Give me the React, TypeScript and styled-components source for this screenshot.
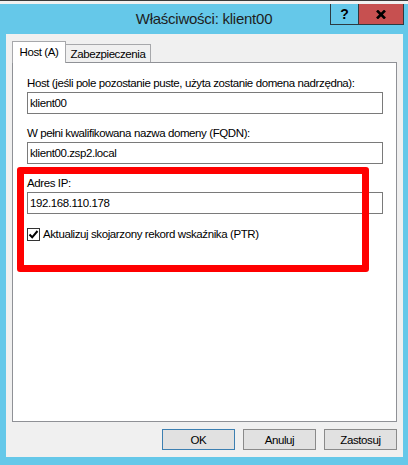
import React from "react";
import styled, { createGlobalStyle } from "styled-components";

const GlobalStyle = createGlobalStyle`
  html, body { margin: 0; padding: 0; }
  body { font-family: "Liberation Sans", Arial, sans-serif; font-size: 11.5px; letter-spacing: -0.4px; color: #000; }
  * { box-sizing: border-box; }
`;

const Window = styled.div`
  width: 408px;
  height: 465px;
  display: flex;
  flex-direction: column;
  background: #65c8e9;
`;

const TopStrip = styled.div`
  height: 4px;
  background: #f0f0f0;
  border-top: 1px solid #3a3a3a;
`;

const TitleBar = styled.div`
  height: 30px;
  display: grid;
  grid-template-columns: 1fr auto 1fr;
`;

const Title = styled.div`
  grid-column: 2;
  line-height: 30px;
  font-size: 15px;
  letter-spacing: -0.25px;
  color: #1e1e1e;
  white-space: nowrap;
  padding-bottom: 1px;
`;

const Controls = styled.div`
  grid-column: 3;
  justify-self: end;
  align-self: start;
  display: flex;
  height: 21px;
  margin-right: 4px;
  border: 1px solid #2c3a40;
  border-top: none;
`;

const CtrlButton = styled.div<{ $w: number; $bg: string }>`
  width: ${(p) => p.$w}px;
  display: flex;
  align-items: center;
  justify-content: center;
  background: ${(p) => p.$bg};
  font-weight: bold;
  font-size: 14px;
  letter-spacing: 0;
  & + & { border-left: 1px solid #2c3a40; }
`;

const Content = styled.div`
  flex: 1;
  margin: 0 5px 8px 6px;
  background: #f0f0f0;
  padding: 7px 6px 7px 6px;
  display: flex;
  flex-direction: column;
`;

const TabStrip = styled.div`
  display: flex;
  align-items: flex-end;
  height: 21px;
  position: relative;
  z-index: 1;
`;

const Tab = styled.div<{ $active?: boolean; $w: number }>`
  width: ${(p) => p.$w}px;
  height: ${(p) => (p.$active ? 22 : 18)}px;
  margin-bottom: ${(p) => (p.$active ? -1 : 0)}px;
  background: ${(p) => (p.$active ? "#fff" : "#f0f0f0")};
  border: 1px solid #a7a8ab;
  border-bottom: none;
  ${(p) => (p.$active ? "" : "border-left: none;")}
  display: flex;
  align-items: center;
  justify-content: center;
  padding-bottom: ${(p) => (p.$active ? 2 : 0)}px;
  white-space: nowrap;
`;

const Panel = styled.div`
  height: 360px;
  background: #fff;
  border: 1px solid #8f9196;
  position: relative;
  padding: 12px 13px 0 14px;
  display: flex;
  flex-direction: column;
`;

const Field = styled.div`
  display: flex;
  flex-direction: column;
  & + & { margin-top: 11px; }
`;

const Label = styled.div`
  line-height: 16px;
  margin-bottom: 1px;
  white-space: nowrap;
`;

const TextBox = styled.div`
  height: 22px;
  border: 1px solid #7a7a7a;
  padding: 0 2px;
  line-height: 20px;
`;

const CheckRow = styled.div`
  display: flex;
  align-items: center;
  gap: 3px;
  height: 16px;
  margin-top: 12px;
`;

const CheckBox = styled.div`
  width: 13px;
  height: 13px;
  border: 1px solid #333;
  background: #fff;
  display: flex;
  align-items: center;
  justify-content: center;
`;

const Highlight = styled.div`
  position: absolute;
  left: 4px;
  top: 104px;
  width: 352px;
  height: 105px;
  border: 7px solid #ff0000;
  border-radius: 3px;
  pointer-events: none;
`;

const ButtonRow = styled.div`
  display: flex;
  justify-content: flex-end;
  gap: 8px;
  margin-top: 7px;
`;

const DlgButton = styled.div<{ $focused?: boolean }>`
  width: 73px;
  height: 21px;
  background: #e1e1e1;
  border: 1px solid ${(p) => (p.$focused ? "#3c7fb1" : "#8a8a8a")};
  display: flex;
  align-items: center;
  justify-content: center;
`;

export default function App() {
  return (
    <>
      <GlobalStyle />
      <Window>
        <TopStrip />
        <TitleBar>
          <Title>Właściwości: klient00</Title>
          <Controls>
            <CtrlButton $w={27} $bg="#65c8e9">?</CtrlButton>
            <CtrlButton $w={45} $bg="#c75050">
              <svg width="10" height="9" viewBox="0 0 10 9">
                <path d="M1 0.5 L9 8.5 M9 0.5 L1 8.5" stroke="#000" strokeWidth="2.6" />
              </svg>
            </CtrlButton>
          </Controls>
        </TitleBar>
        <Content>
          <TabStrip>
            <Tab $active $w={54}>Host (A)</Tab>
            <Tab $w={85}>Zabezpieczenia</Tab>
          </TabStrip>
          <Panel>
            <Field>
              <Label>Host (jeśli pole pozostanie puste, użyta zostanie domena nadrzędna):</Label>
              <TextBox>klient00</TextBox>
            </Field>
            <Field>
              <Label>W pełni kwalifikowana nazwa domeny (FQDN):</Label>
              <TextBox>klient00.zsp2.local</TextBox>
            </Field>
            <Field>
              <Label>Adres IP:</Label>
              <TextBox>192.168.110.178</TextBox>
            </Field>
            <CheckRow>
              <CheckBox>
                <svg width="11" height="11" viewBox="0 0 11 11">
                  <path d="M1.5 5.5 L4.2 8.3 L9.5 2" stroke="#000" strokeWidth="2" fill="none" />
                </svg>
              </CheckBox>
              <span>Aktualizuj skojarzony rekord wskaźnika (PTR)</span>
            </CheckRow>
            <Highlight />
          </Panel>
          <ButtonRow>
            <DlgButton $focused>OK</DlgButton>
            <DlgButton>Anuluj</DlgButton>
            <DlgButton>Zastosuj</DlgButton>
          </ButtonRow>
        </Content>
      </Window>
    </>
  );
}
